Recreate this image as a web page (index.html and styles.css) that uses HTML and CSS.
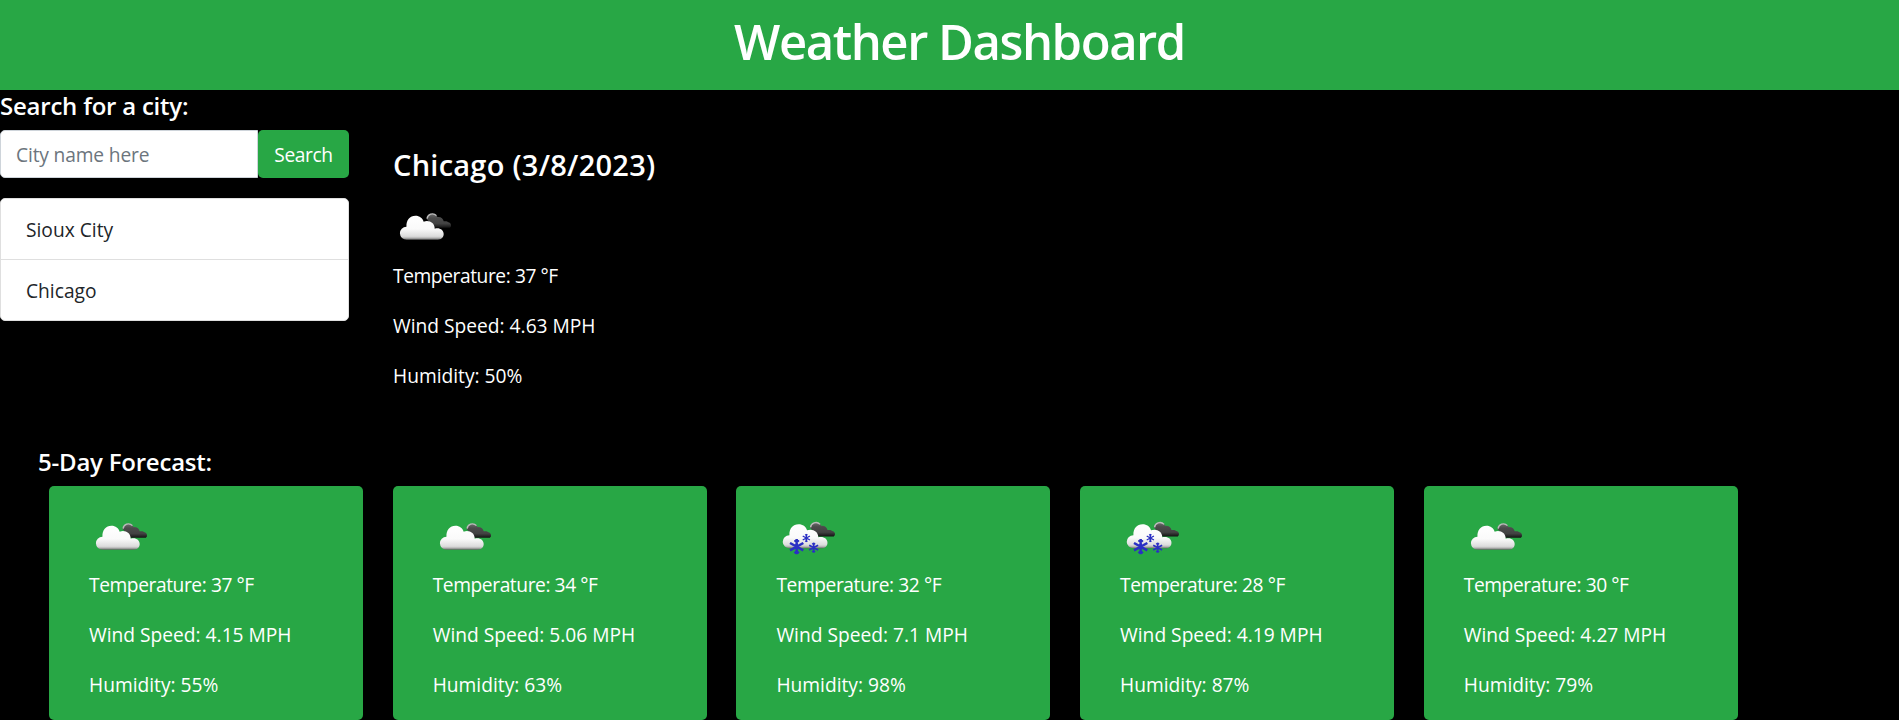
FILE: index.html
```
<!DOCTYPE html>
<html lang="en">
<head>
<meta charset="utf-8">
<title>Weather Dashboard</title>
<link rel="stylesheet" href="styles.css">
</head>
<body>
<svg class="defs" aria-hidden="true">
  <defs>
    <linearGradient id="white-fill" gradientUnits="userSpaceOnUse" x1="0" y1="46" x2="0" y2="120">
      <stop offset="0" stop-color="#fff"/><stop offset=".55" stop-color="#fafafa"/>
      <stop offset=".85" stop-color="#dcdcdc"/><stop offset=".92" stop-color="#b5b5b5"/><stop offset="1" stop-color="#555"/>
    </linearGradient>
    <linearGradient id="dark-fill" gradientUnits="userSpaceOnUse" x1="0" y1="38" x2="0" y2="85">
      <stop offset="0" stop-color="#777"/><stop offset=".35" stop-color="#4b4b4b"/>
      <stop offset=".7" stop-color="#424242"/><stop offset="1" stop-color="#0c0c0c"/>
    </linearGradient>
    <symbol id="clouds" viewBox="9 3 174 150" preserveAspectRatio="none">
      <path fill="url(#dark-fill)" d="M106 56a17 17 0 0 1 32-5c10-1 17 5 18 13 7-1 11 0 14 3a9.500 9.500 0 0 1 4 16.500H128Z"/>
      <path fill="none" stroke="#bbb" stroke-width="4" d="M108 56c1-13 17-20 27-9"/>
      <path fill="url(#white-fill)" d="M49 119a19 19 0 0 1-1-39c-1-20 10-33 26-33 12 0 21 7 24 18 15-6 32 3 32 21 14-4 26 4 26 16 0 10-7 17-17 17Z"/>
    </symbol>
    <symbol id="flake" viewBox="-12 -12 24 24">
      <path fill="none" stroke="#2a2fc4" stroke-width="3.800" d="M0-11.500V11.500M-10-5.500 10 5.500M-10 5.500 10-5.500M-3-10 0-7 3-10M-3 10 0 7 3 10"/>
    </symbol>
    <symbol id="snow" viewBox="9 3 180 150">
      <use href="#clouds" x="8" y="-1" width="184" height="150"/>
      <use href="#flake" x="47" y="86" width="48" height="48"/>
      <use href="#flake" x="87" y="71" width="26" height="26"/>
      <use href="#flake" x="106" y="97" width="32" height="32"/>
    </symbol>
  </defs>
</svg>
<header class="header"><h1 class="title">Weather Dashboard</h1></header>
<main>
  <div class="top">
    <section class="search">
      <h5 class="heading search-heading">Search for a city:</h5>
      <form class="search-form">
        <input class="search-input" type="text" placeholder="City name here">
        <button class="search-button" type="button">Search</button>
      </form>
      <ul class="history"><li>Sioux City</li><li>Chicago</li></ul>
    </section>
    <section class="current">
      <h3 class="city">Chicago (3/8/2023)</h3>
      <svg class="icon"><use href="#clouds"/></svg>
      <p class="temperature">Temperature: 37 °F</p><p>Wind Speed: 4.63 MPH</p><p>Humidity: 50%</p>
    </section>
  </div>
  <section class="forecast">
    <h5 class="heading forecast-heading">5-Day Forecast:</h5>
    <div class="cards">
      <article class="card"><svg class="icon"><use href="#clouds"/></svg><p class="temperature">Temperature: 37 °F</p><p>Wind Speed: 4.15 MPH</p><p>Humidity: 55%</p></article>
      <article class="card"><svg class="icon"><use href="#clouds"/></svg><p class="temperature">Temperature: 34 °F</p><p>Wind Speed: 5.06 MPH</p><p>Humidity: 63%</p></article>
      <article class="card"><svg class="icon"><use href="#snow"/></svg><p class="temperature">Temperature: 32 °F</p><p>Wind Speed: 7.1 MPH</p><p>Humidity: 98%</p></article>
      <article class="card"><svg class="icon"><use href="#snow"/></svg><p class="temperature">Temperature: 28 °F</p><p>Wind Speed: 4.19 MPH</p><p>Humidity: 87%</p></article>
      <article class="card"><svg class="icon"><use href="#clouds"/></svg><p class="temperature">Temperature: 30 °F</p><p>Wind Speed: 4.27 MPH</p><p>Humidity: 79%</p></article>
    </div>
  </section>
</main>
</body>
</html>
```
FILE: styles.css
```
* { box-sizing: border-box; }
body {
  margin: 0;
  height: 720px;
  overflow: hidden;
  background: #000;
  color: #fff;
  font: 400 19.2px/30px "Segoe UI", "Open Sans", "Noto Sans", sans-serif;
}
h1, h3, h5, p, ul { margin: 0; padding: 0; }
.defs { position: absolute; width: 0; height: 0; }
.header { height: 90px; padding: 11px 0 0 20px; background: #28a745; text-align: center; }
.title { font-size: 49px; line-height: 60px; font-weight: 600; letter-spacing: -1.450px; }
.top { display: flex; height: 357px; }
.search { width: 349px; }
.heading { font-size: 24px; line-height: 30px; font-weight: 600; letter-spacing: -.22px; }
.search-heading { margin: 0; padding: 1px 0 9px; }
.search-form { display: flex; height: 48px; margin-bottom: 20px; }
.search-input {
  width: 258px;
  padding: 2px 15px 0;
  border: 1px solid #ced4da;
  border-radius: 5px 0 0 5px;
  font: inherit;
  letter-spacing: -.15px;
}
.search-input::placeholder { color: #6c757d; }
.search-button {
  width: 91px;
  padding: 2px 0 0;
  border: 0;
  border-radius: 5px;
  background: #28a745;
  color: #fff;
  font: inherit;
  letter-spacing: -.4px;
}
.history {
  border: 1px solid #dfdfdf;
  border-radius: 5px;
  background: #fff;
  color: #212529;
  list-style: none;
}
.history li { padding: 16px 25px 14px; }
.history li + li { border-top: 1px solid #dfdfdf; }
.current { padding: 57px 0 0 44px; }
.city { font-size: 29px; line-height: 36px; font-weight: 600; letter-spacing: .25px; }
.icon { display: block; width: 60px; height: 50px; }
.current .icon { margin: 18px 0 10px; }
p { margin-bottom: 20px; }
.temperature { letter-spacing: -.42px; }
.forecast-heading { margin: 0 0 9px 38px; }
.cards { display: flex; gap: 29.700px; padding-left: 49px; }
.card {
  width: 314px;
  height: 234px;
  padding: 25px 40px 0;
  border-radius: 5px;
  background: #28a745;
}
.card .icon { margin-bottom: 9px; }
```
